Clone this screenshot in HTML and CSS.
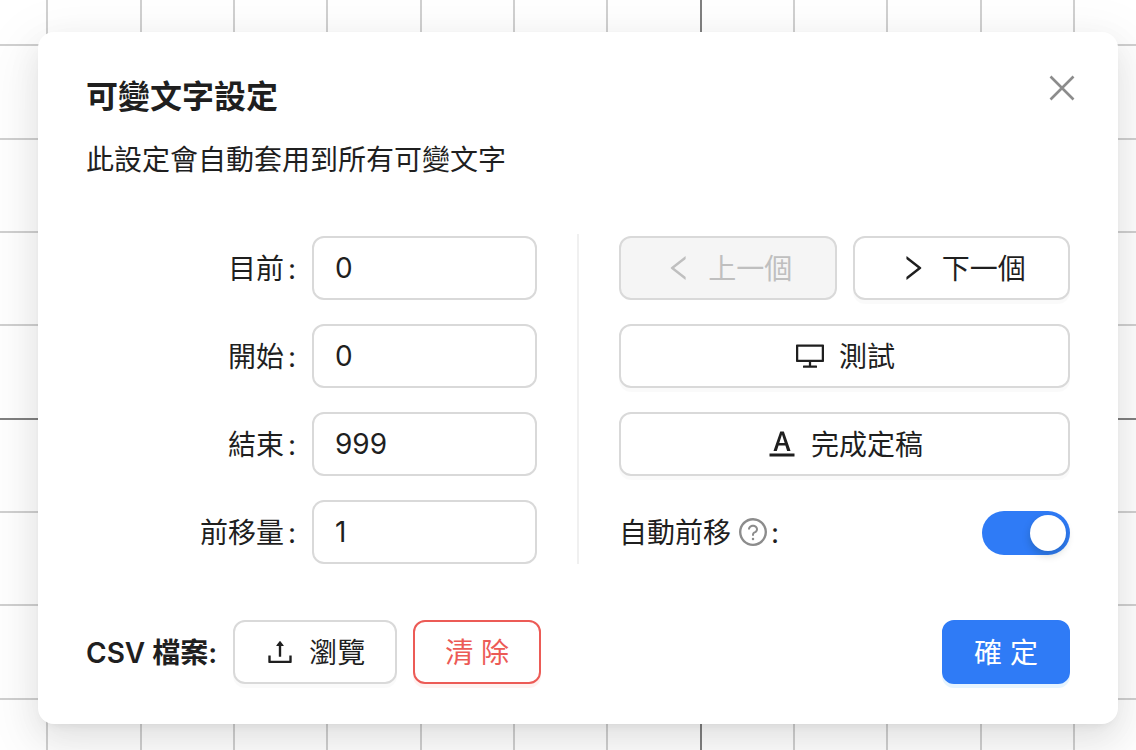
FILE: index.html
```html
<!DOCTYPE html>
<html lang="zh-Hant">
<head>
<meta charset="utf-8">
<meta name="viewport" content="width=device-width, initial-scale=1">
<title>可變文字設定</title>
<link rel="stylesheet" href="styles.css">
</head>
<body>
<svg class="grid" aria-hidden="true">
  <path class="grid-line" d="M47 0V2000M141 0V2000M234 0V2000M327 0V2000M421 0V2000M514 0V2000M607 0V2000M794 0V2000M887 0V2000M981 0V2000M1074 0V2000M0 45H4000M0 139H4000M0 232H4000M0 325H4000M0 512H4000M0 605H4000M0 699H4000"/>
  <path class="grid-axis" d="M701 0V2000M0 419H4000"/>
</svg>
<main class="modal" role="dialog" aria-labelledby="title">
  <header class="header">
    <div>
      <h1 class="title" id="title">可變文字設定</h1>
      <p class="subtitle">此設定會自動套用到所有可變文字</p>
    </div>
    <button class="close" type="button" aria-label="關閉">
      <svg class="icon" viewBox="0 0 32 32" aria-hidden="true"><path d="M4.500 4.500L27.500 27.500M27.500 4.500L4.500 27.500" fill="none" stroke="currentColor" stroke-width="2.600"/></svg>
    </button>
  </header>
  <div class="body">
    <div class="fields">
      <label class="label" for="current">目前<span class="colon">:</span></label>
      <input class="input" id="current" type="text" value="0">
      <label class="label" for="start">開始<span class="colon">:</span></label>
      <input class="input" id="start" type="text" value="0">
      <label class="label" for="end">結束<span class="colon">:</span></label>
      <input class="input" id="end" type="text" value="999">
      <label class="label" for="step">前移量<span class="colon">:</span></label>
      <input class="input" id="step" type="text" value="1">
    </div>
    <div class="actions">
      <div class="pair">
        <button class="button" type="button" disabled>
          <svg class="icon" viewBox="0 0 1024 1024" aria-hidden="true"><path d="M724 218.300V141c0-6.700-7.700-10.400-12.900-6.300L260.300 486.800a31.860 31.860 0 000 50.300l450.800 352.100c5.300 4.100 12.900.4 12.900-6.300v-77.300c0-4.900-2.300-9.600-6.100-12.600l-360-281 360-281.100c3.800-3 6.100-7.700 6.100-12.600z"/></svg>
          <span>上一個</span>
        </button>
        <button class="button" type="button">
          <svg class="icon" viewBox="0 0 1024 1024" aria-hidden="true"><path d="M765.700 486.800L314.900 134.700A7.970 7.970 0 00302 141v77.300c0 4.900 2.300 9.600 6.100 12.600l360 281.100-360 281.100c-3.900 3-6.100 7.700-6.100 12.600V883c0 6.700 7.700 10.400 12.900 6.300l450.800-352.100a31.960 31.960 0 000-50.400z"/></svg>
          <span>下一個</span>
        </button>
      </div>
      <button class="button" type="button">
        <svg class="icon" viewBox="0 0 1024 1024" aria-hidden="true"><path d="M928 140H96c-17.700 0-32 14.300-32 32v496c0 17.700 14.300 32 32 32h380v112H304c-8.800 0-16 7.200-16 16v48c0 4.400 3.600 8 8 8h432c4.400 0 8-3.600 8-8v-48c0-8.800-7.200-16-16-16H548V700h380c17.700 0 32-14.300 32-32V172c0-17.700-14.300-32-32-32zm-40 488H136V212h752v416z"/></svg>
        <span>測試</span>
      </button>
      <button class="button" type="button">
        <svg class="icon" viewBox="0 0 1024 1024" aria-hidden="true"><path d="M904 816H120c-4.400 0-8 3.600-8 8v80c0 4.400 3.600 8 8 8h784c4.400 0 8-3.600 8-8v-80c0-4.400-3.600-8-8-8zm-650.300-80h85c4.200 0 8-2.700 9.300-6.800l53.700-166h219.200l53.200 166c1.300 4 5 6.800 9.300 6.800h89c1.100 0 2.200-.2 3.200-.5a9.700 9.700 0 006-12.400L573.600 118.600a9.900 9.900 0 00-9.200-6.600H462.100c-4.200 0-7.900 2.600-9.200 6.600L244.500 723.100c-.4 1-.5 2.100-.5 3.200-.1 5.300 4.300 9.700 9.700 9.700zm255.900-516.100h4.100l83.800 263.800H424.900l84.700-263.800z"/></svg>
        <span>完成定稿</span>
      </button>
      <div class="toggle-row">
        <label class="toggle-label" for="auto"><span>自動前移</span>
          <svg class="icon help" viewBox="0 0 1024 1024" aria-hidden="true"><path d="M512 64C264.600 64 64 264.600 64 512s200.600 448 448 448 448-200.600 448-448S759.400 64 512 64zm0 820c-205.400 0-372-166.600-372-372s166.600-372 372-372 372 166.600 372 372-166.600 372-372 372z"/><path d="M623.600 316.700C593.600 290.400 554 276 512 276s-81.600 14.500-111.600 40.700C369.200 344 352 380.700 352 420v7.600c0 4.400 3.600 8 8 8h48c4.400 0 8-3.600 8-8V420c0-44.100 43.100-80 96-80s96 35.900 96 80c0 31.100-22 59.600-56.100 72.700-21.200 8.100-39.200 22.300-52.100 40.900-13.100 19-19.900 41.800-19.900 64.900V620c0 4.400 3.600 8 8 8h48c4.400 0 8-3.600 8-8v-22.700a48.300 48.300 0 0130.900-44.800c59-22.700 97.100-74.700 97.100-132.500.1-39.300-17.100-76-48.300-103.300zM472 732a40 40 0 1080 0 40 40 0 10-80 0z"/></svg>
          <span>:</span>
        </label>
        <input class="switch" id="auto" type="checkbox" role="switch" checked>
      </div>
    </div>
  </div>
  <footer class="footer">
    <span class="csv">CSV 檔案:</span>
    <button class="button browse" type="button">
      <svg class="icon" viewBox="0 0 1024 1024" aria-hidden="true"><path d="M400 317.700h73.900V656c0 4.400 3.600 8 8 8h60c4.400 0 8-3.600 8-8V317.700H624c6.700 0 10.400-7.700 6.300-12.900L518.300 163a8 8 0 00-12.600 0l-112 141.700c-4.100 5.300-.4 13 6.300 13zM878 626h-60c-4.400 0-8 3.600-8 8v154H214V634c0-4.400-3.600-8-8-8h-60c-4.400 0-8 3.600-8 8v198c0 17.700 14.300 32 32 32h684c17.700 0 32-14.300 32-32V634c0-4.400-3.600-8-8-8z"/></svg>
      <span>瀏覽</span>
    </button>
    <button class="button danger" type="button"><span>清 除</span></button>
    <button class="button primary" type="button"><span>確 定</span></button>
  </footer>
</main>
</body>
</html>
```
FILE: styles.css
```css
* {
  box-sizing: border-box;
}

body {
  margin: 0;
  padding: 32px 18px 26px 38px;
  background: #fff;
  color: #1f1f1f;
  font: 28px/44px Inter, "Noto Sans CJK TC", sans-serif;
  overflow: hidden;
}

.grid {
  position: absolute;
  inset: 0;
  width: 100%;
  height: 100%;
  z-index: -1;
}

.grid-line,
.grid-axis {
  fill: none;
  stroke: #d0d0d0;
  stroke-width: 2;
}

.grid-axis {
  stroke: #808080;
}

.modal {
  padding: 40px 48px;
  background: #fff;
  border-radius: 16px;
  box-shadow:
    0 12px 32px rgba(0, 0, 0, 0.08),
    0 6px 12px -8px rgba(0, 0, 0, 0.12),
    0 18px 56px 16px rgba(0, 0, 0, 0.05);
}

.header {
  display: flex;
  justify-content: space-between;
  align-items: flex-start;
}

.title {
  margin: 0 0 16px;
  font-size: 32px;
  line-height: 50px;
  font-weight: 600;
}

.subtitle {
  margin: 0;
}

.close {
  display: flex;
  margin: 0 -8px 0 0;
  padding: 0;
  border: 0;
  background: none;
  color: #8c8c8c;
  cursor: pointer;
}

.icon {
  flex: none;
  width: 32px;
  height: 32px;
  fill: currentColor;
}

.body {
  display: flex;
  align-items: stretch;
  margin-top: 52px;
}

.fields {
  flex: 1 1 0;
  display: grid;
  grid-template-columns: 1fr 225px;
  gap: 24px 16px;
  padding: 2px 40px 0 0;
  border-right: 2px solid #f0f0f0;
}

.label {
  display: flex;
  align-items: center;
  justify-content: flex-end;
  gap: 4px;
  padding-top: 2px;
}

.input {
  width: 100%;
  height: 64px;
  padding: 0 21px;
  border: 2px solid #d9d9d9;
  border-radius: 12px;
  background: #fff;
  color: inherit;
  font: inherit;
}

.actions {
  flex: 1 1 0;
  display: flex;
  flex-direction: column;
  gap: 24px;
  padding: 2px 0 0 40px;
}

.pair {
  display: grid;
  grid-template-columns: 1fr 1fr;
  gap: 16px;
}

.button {
  display: flex;
  align-items: center;
  justify-content: center;
  gap: 13px;
  height: 64px;
  padding: 0 30px;
  border: 2px solid #d9d9d9;
  border-radius: 12px;
  background: #fff;
  box-shadow: 0 4px 0 rgba(0, 0, 0, 0.02);
  color: inherit;
  font: inherit;
  white-space: nowrap;
  cursor: pointer;
}

.button span,
.toggle-label span {
  padding-top: 2px;
}

.button:disabled {
  background: #f5f5f5;
  box-shadow: none;
  color: #bfbfbf;
  cursor: default;
}

.browse {
  padding-left: 29px;
}

.danger {
  border-color: #ec5b56;
  box-shadow: 0 4px 0 rgba(255, 38, 5, 0.06);
  color: #ec5b56;
}

.primary {
  margin-left: auto;
  border-color: #2f7bf6;
  background: #2f7bf6;
  box-shadow: 0 4px 0 rgba(5, 145, 255, 0.1);
  color: #fff;
}

.toggle-row {
  display: flex;
  align-items: center;
  justify-content: space-between;
  height: 64px;
}

.toggle-label {
  display: flex;
  align-items: center;
  gap: 2px;
}

.help {
  margin-left: 4px;
  color: #8c8c8c;
}

.switch {
  appearance: none;
  display: flex;
  justify-content: flex-end;
  width: 88px;
  height: 44px;
  margin: 2px 0 0;
  padding: 4px;
  border-radius: 22px;
  background: #2f7bf6;
  cursor: pointer;
}

.switch::before {
  content: "";
  width: 36px;
  height: 36px;
  border-radius: 50%;
  background: #fff;
  box-shadow: 0 4px 8px rgba(0, 35, 11, 0.2);
}

.switch:not(:checked) {
  justify-content: flex-start;
  background: #bfbfbf;
}

.footer {
  display: flex;
  align-items: center;
  gap: 16px;
  margin-top: 56px;
}

.csv {
  padding-top: 2px;
  font-weight: 600;
}
```
